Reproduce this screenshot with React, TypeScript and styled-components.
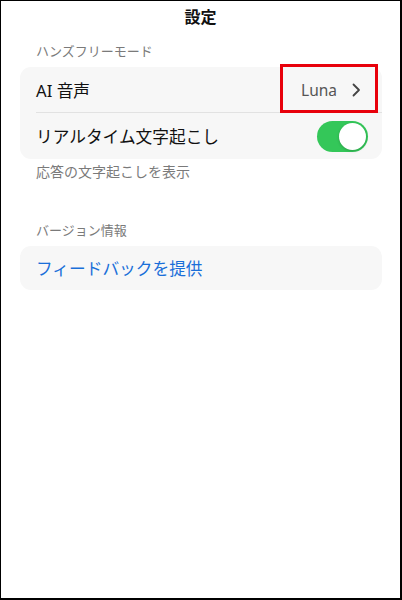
import React, { useState } from "react";
import styled, { createGlobalStyle } from "styled-components";

const TextColor = "#111111";
const MutedColor = "#7a7a7a";
const CardColor = "#f7f7f7";
const LinkColor = "#1a6fd9";
const SwitchOn = "#34c759";

const GlobalStyle = createGlobalStyle`
  html, body {
    margin: 0;
    padding: 0;
    background: #fff;
  }
  body {
    font-family: "Noto Sans", "Noto Sans CJK JP", sans-serif;
    color: ${TextColor};
  }
  * {
    box-sizing: border-box;
  }
`;

const Screen = styled.div`
  width: 402px;
  height: 600px;
  border-style: solid;
  border-color: #000;
  border-width: 1px 2px 2px 1px;
  background: #fff;
  display: flex;
  flex-direction: column;
`;

const Title = styled.h1`
  margin: 0;
  height: 33px;
  line-height: 33px;
  text-align: center;
  font-size: 16px;
  font-weight: 700;
`;

const Content = styled.div`
  display: flex;
  flex-direction: column;
  padding: 0 18px 0 19px;
`;

const SectionLabel = styled.div<{ top: number }>`
  margin-top: ${(p) => p.top}px;
  margin-bottom: 7px;
  padding-left: 16px;
  font-size: 13px;
  line-height: 18px;
  color: ${MutedColor};
`;

const Card = styled.div`
  background: ${CardColor};
  border-radius: 11px;
  display: flex;
  flex-direction: column;
`;

const Row = styled.div<{ height: number; divider?: boolean }>`
  position: relative;
  height: ${(p) => p.height}px;
  margin-left: 16px;
  padding-right: 14px;
  display: flex;
  align-items: center;
  justify-content: space-between;
  border-bottom: ${(p) => (p.divider ? "1px solid #e2e2e2" : "none")};
`;

const RowLabel = styled.span<{ link?: boolean }>`
  font-size: 16.7px;
  color: ${(p) => (p.link ? LinkColor : TextColor)};
`;

const Value = styled.div`
  display: flex;
  align-items: center;
  gap: 15px;
  padding-right: 7px;
  font-size: 15.5px;
  color: #555;
`;

const Highlight = styled.div`
  position: absolute;
  right: 4px;
  top: -3px;
  width: 98px;
  height: 49px;
  border: 3px solid #e8000b;
  pointer-events: none;
`;

const Footnote = styled.div`
  margin-top: 3px;
  padding-left: 16px;
  font-size: 14px;
  line-height: 20px;
  color: ${MutedColor};
`;

const Switch = styled.button<{ on: boolean }>`
  position: relative;
  width: 51px;
  height: 31px;
  border: none;
  padding: 0;
  border-radius: 16px;
  background: ${(p) => (p.on ? SwitchOn : "#e5e5ea")};
  cursor: pointer;
  &::after {
    content: "";
    position: absolute;
    top: 2px;
    left: ${(p) => (p.on ? "22px" : "2px")};
    width: 27px;
    height: 27px;
    border-radius: 50%;
    background: #fff;
    box-shadow: 0 1px 3px rgba(0, 0, 0, 0.2);
  }
`;

const Chevron = () => (
  <svg width="9" height="14" viewBox="0 0 9 14" fill="none">
    <path
      d="M1.5 1.5L7 7L1.5 12.5"
      stroke="#444"
      strokeWidth="1.8"
      strokeLinecap="round"
      strokeLinejoin="round"
    />
  </svg>
);

const App = () => {
  const [transcript, setTranscript] = useState(true);

  return (
    <>
      <GlobalStyle />
      <Screen>
        <Title>設定</Title>
        <Content>
          <SectionLabel top={8}>ハンズフリーモード</SectionLabel>
          <Card>
            <Row height={46} divider>
              <RowLabel>AI 音声</RowLabel>
              <Value>
                Luna
                <Chevron />
              </Value>
              <Highlight />
            </Row>
            <Row height={46}>
              <RowLabel>リアルタイム文字起こし</RowLabel>
              <Switch on={transcript} onClick={() => setTranscript(!transcript)} />
            </Row>
          </Card>
          <Footnote>応答の文字起こしを表示</Footnote>

          <SectionLabel top={39}>バージョン情報</SectionLabel>
          <Card>
            <Row height={44}>
              <RowLabel link>フィードバックを提供</RowLabel>
            </Row>
          </Card>
        </Content>
      </Screen>
    </>
  );
};

export default App;
